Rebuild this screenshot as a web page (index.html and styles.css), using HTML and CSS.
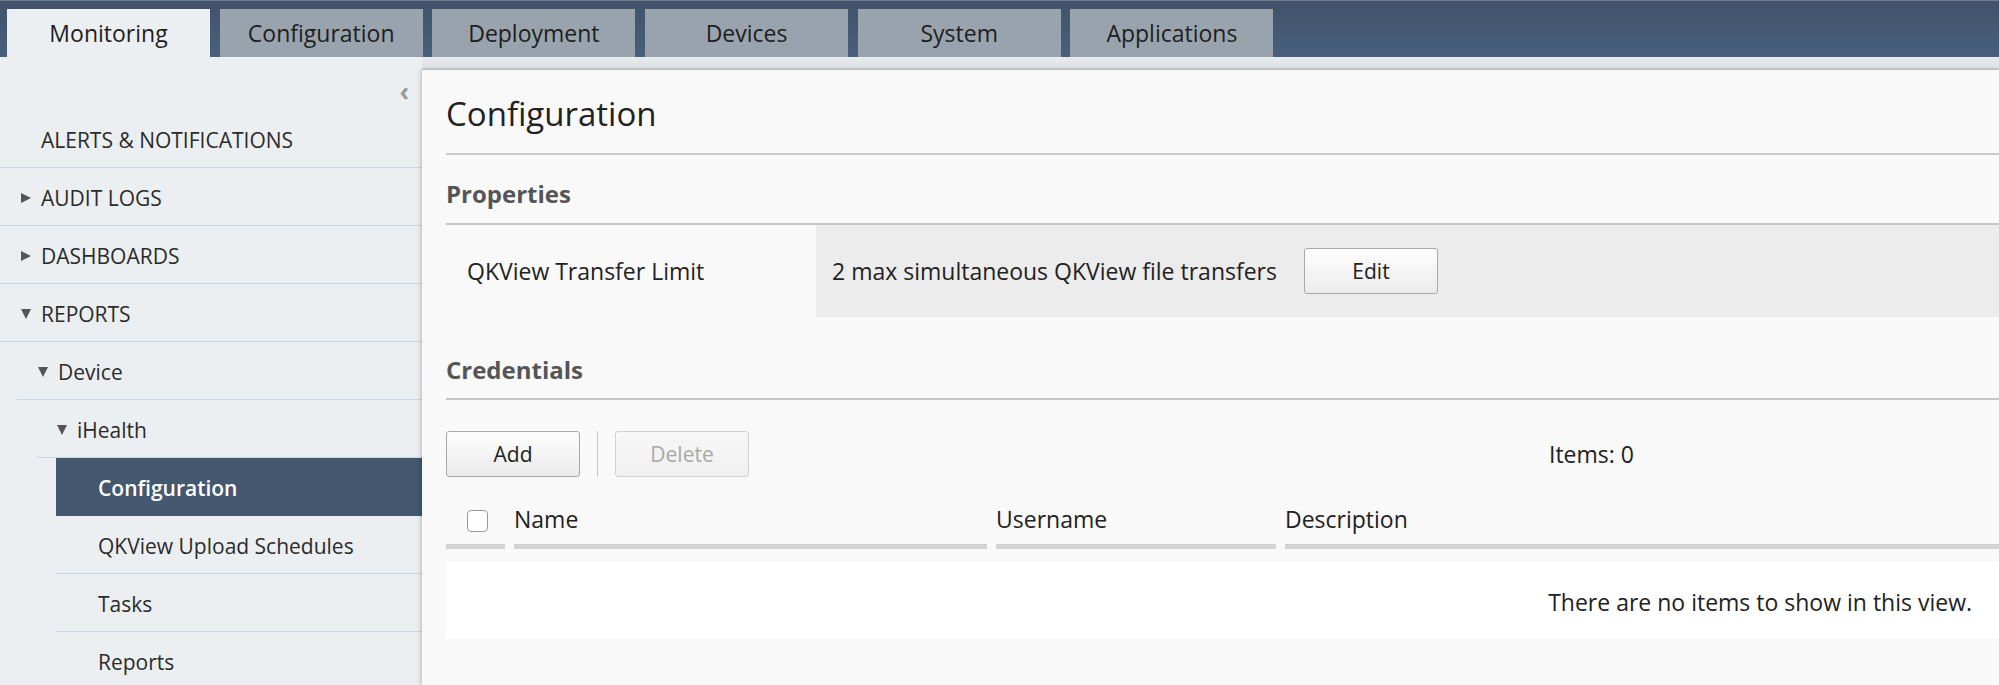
FILE: index.html
```html
<!DOCTYPE html>
<html lang="en">
<head>
<meta charset="utf-8">
<title>Configuration</title>
<link rel="stylesheet" href="styles.css">
</head>
<body>
<header class="topbar">
  <nav class="tabs">
    <div class="tab active">Monitoring</div>
    <div class="tab">Configuration</div>
    <div class="tab">Deployment</div>
    <div class="tab">Devices</div>
    <div class="tab">System</div>
    <div class="tab">Applications</div>
  </nav>
</header>
<div class="layout">
  <aside class="sidebar">
    <div class="sb-top"><span class="collapse">&#8249;</span></div>
    <ul class="tree">
      <li class="row lvl0"><span class="label caps">ALERTS &amp; NOTIFICATIONS</span></li>
      <li class="row lvl0"><span class="tri right"></span><span class="label caps">AUDIT LOGS</span></li>
      <li class="row lvl0"><span class="tri right"></span><span class="label caps">DASHBOARDS</span></li>
      <li class="row lvl0"><span class="tri down"></span><span class="label caps">REPORTS</span></li>
      <li class="row lvl1"><span class="tri down"></span><span class="label">Device</span></li>
      <li class="row lvl2"><span class="tri down"></span><span class="label">iHealth</span></li>
      <li class="row lvl3 selected"><span class="label">Configuration</span></li>
      <li class="row lvl3"><span class="label">QKView Upload Schedules</span></li>
      <li class="row lvl3"><span class="label">Tasks</span></li>
      <li class="row lvl3"><span class="label">Reports</span></li>
    </ul>
  </aside>
  <main class="main">
    <section class="panel">
      <h1 class="page-title">Configuration</h1>

      <h2 class="section-title props-title">Properties</h2>
      <div class="prop-row">
        <div class="prop-label">QKView Transfer Limit</div>
        <div class="prop-value">
          <span>2 max simultaneous QKView file transfers</span>
          <button class="btn">Edit</button>
        </div>
      </div>

      <h2 class="section-title cred-title">Credentials</h2>
      <div class="toolbar">
        <button class="btn">Add</button>
        <span class="vsep"></span>
        <button class="btn disabled">Delete</button>
        <span class="items">Items: 0</span>
      </div>

      <div class="grid-head">
        <div class="col col-check"><span class="checkbox"></span></div>
        <div class="col col-name">Name</div>
        <div class="col col-user">Username</div>
        <div class="col col-desc">Description</div>
      </div>
      <div class="empty">There are no items to show in this view.</div>
    </section>
  </main>
</div>
</body>
</html>
```

FILE: styles.css
```css
* { box-sizing: border-box; }
html, body { margin: 0; padding: 0; }
body {
  font-family: "Open Sans", "Noto Sans", sans-serif;
  color: #222;
  background: #eceff2;
  width: 1999px;
  height: 685px;
  overflow: hidden;
}

/* Top tab bar */
.topbar {
  height: 57px;
  background: linear-gradient(#42526a, #47607c);
  border-top: 1px solid #6d7b8d;
  display: flex;
  align-items: flex-end;
}
.tabs {
  display: flex;
  gap: 9.7px;
  padding-left: 7px;
}
.tab {
  width: 203px;
  height: 48px;
  background: #99a3ad;
  color: #1e1e1e;
  font-size: 23px;
  display: flex;
  align-items: center;
  justify-content: center;
}
.tab.active { background: #eceff2; }

/* Layout */
.layout {
  display: flex;
  height: 628px;
}
.sidebar {
  width: 422px;
  flex: none;
  background: #eceff2;
}
.sb-top {
  height: 53px;
  display: flex;
  justify-content: flex-end;
  align-items: flex-start;
  padding-right: 13px;
}
.collapse {
  color: #999;
  font-size: 26px;
  font-weight: 700;
  line-height: 26px;
  margin-top: 21px;
}
.tree { list-style: none; margin: 0; padding: 0; }
.row {
  height: 58px;
  border-bottom: 1px solid #cfd5dc;
  display: flex;
  align-items: center;
  padding-left: 20px;
  padding-top: 2px;
  font-size: 21px;
  color: #2b2b2b;
}
.row.lvl0 { padding-left: 41px; }
.row.lvl0 .tri { margin-left: -20px; }
.row.lvl1 { margin-left: 17px; padding-left: 21px; }
.row.lvl2 { margin-left: 37px; padding-left: 20px; }
.row.lvl3 { margin-left: 56px; padding-left: 42px; }
.tri {
  display: inline-block;
  flex: none;
}
.tri.right {
  width: 0; height: 0;
  border-top: 5.5px solid transparent;
  border-bottom: 5.5px solid transparent;
  border-left: 10px solid #555;
  margin-right: 10px;
}
.tri.down {
  width: 0; height: 0;
  border-left: 5.5px solid transparent;
  border-right: 5.5px solid transparent;
  border-top: 10px solid #555;
  margin-right: 10px;
}
.row.selected {
  background: #44586f;
  color: #fff;
  font-weight: 600;
  border-bottom-color: #44586f;
}

/* Main */
.main {
  flex: 1;
  background: linear-gradient(#e9ecef 0, #dfe2e5 10px, #cfd3d6 13px);
  padding-top: 13px;
  min-width: 0;
}
.panel {
  background: #f9f9f9;
  height: 100%;
  padding-left: 24px;
  box-shadow: -2px 0 4px rgba(0,0,0,0.15), 0 -1px 2px rgba(0,0,0,0.1);
}
.page-title {
  margin: 0;
  font-size: 33px;
  font-weight: 400;
  line-height: 45px;
  padding-top: 21px;
  padding-bottom: 17px;
  border-bottom: 2px solid #cacaca;
  color: #222;
}
.section-title {
  margin: 0;
  font-size: 24px;
  font-weight: 700;
  line-height: 30px;
  color: #555;
  border-bottom: 2px solid #c6c6c6;
}
.props-title { margin-top: 24px; padding-bottom: 14px; }
.cred-title { margin-top: 38px; padding-bottom: 13px; }

.prop-row {
  display: flex;
  height: 92px;
  font-size: 23px;
}
.prop-label {
  width: 370px;
  flex: none;
  display: flex;
  align-items: center;
  padding-left: 21px;
  color: #222;
}
.prop-value {
  flex: 1;
  background: #ececec;
  display: flex;
  align-items: center;
  padding-left: 16px;
  gap: 27px;
  color: #222;
}

.btn {
  font-family: inherit;
  font-size: 21px;
  color: #222;
  width: 134px;
  height: 46px;
  border: 1px solid #a9a9a9;
  border-radius: 3px;
  background: linear-gradient(#fefefe, #ebebeb);
  padding: 0;
}
.btn.disabled {
  color: #a8a8a8;
  border-color: #d2d2d2;
  background: linear-gradient(#f7f7f7, #f0f0f0);
}

.toolbar {
  margin-top: 31px;
  display: flex;
  align-items: center;
  height: 46px;
}
.vsep {
  width: 1px;
  height: 46px;
  background: #c8c8c8;
  margin: 0 17px;
}
.items {
  margin-left: 800px;
  font-size: 23px;
  color: #222;
}

.grid-head {
  display: flex;
  gap: 9px;
  margin-top: 20px;
  font-size: 23px;
}
.col {
  height: 52px;
  border-bottom: 5px solid #d3d3d3;
  display: flex;
  align-items: center;
  padding-bottom: 4px;
}
.col-check { width: 59px; padding-left: 21px; padding-bottom: 0; }
.col-name { width: 473px; }
.col-user { width: 280px; }
.col-desc { flex: 1; }
.checkbox {
  width: 21px;
  height: 22px;
  border: 1.5px solid #999;
  border-radius: 4px;
  background: #fff;
  display: inline-block;
}

.empty {
  margin-top: 13px;
  height: 77px;
  background: #fff;
  display: flex;
  align-items: center;
  justify-content: flex-end;
  padding-right: 27px;
  padding-top: 2px;
  font-size: 23px;
  color: #222;
}
```
